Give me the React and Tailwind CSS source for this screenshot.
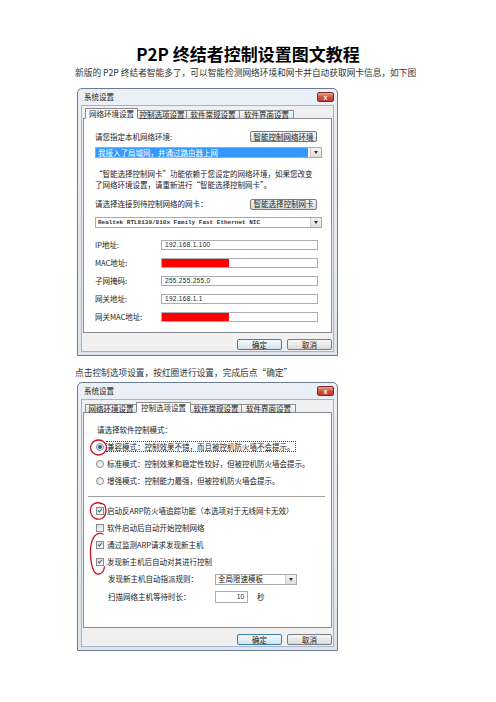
import React from "react";

const Close = () => (
  <div className="w-[17px] h-[10px] rounded-[2px] border border-[#7a2e25] bg-gradient-to-b from-[#e9a497] via-[#cf5443] to-[#c0392b] flex items-center justify-center">
    <span className="text-white text-[7px] leading-none font-bold font-['Liberation_Sans',sans-serif]">x</span>
  </div>
);

const Btn = ({ children, className, primary }) => (
  <div
    className={
      (primary
        ? "border-[#3c7fb1] from-[#f4f9fd] to-[#d3e4f1] "
        : "border-[#7b7b7b] from-[#f7f7f7] to-[#dadada] ") +
      "h-[11px] border rounded-[2px] bg-gradient-to-b flex items-center justify-center text-[7.5px] leading-none " +
      className
    }
  >
    {children}
  </div>
);

const Arrow = () => (
  <div className="w-[11px] h-full border-l border-[#c9c9c9] bg-gradient-to-b from-[#f4f4f4] to-[#dedede] flex items-center justify-center shrink-0">
    <span className="border-x-[2px] border-x-transparent border-t-[3px] border-t-[#333]" />
  </div>
);

const Tab = ({ label, active, className }) => (
  <div
    className={
      (active
        ? "h-[11px] bg-white border-b-white relative z-10 "
        : "h-[9px] bg-gradient-to-b from-[#f8f8f8] to-[#e2e2e2] ") +
      "border border-[#898c95] -ml-px first:ml-0 flex items-center justify-center text-[7.5px] leading-none " +
      className
    }
  >
    {label}
  </div>
);

const Frame = ({ height, tabs, panelHeight, children }) => (
  <div
    className={
      "w-[261px] border border-[#6b7b90] rounded-t-[5px] bg-gradient-to-b from-[#eaf0f7] to-[#dce5ef] flex flex-col " +
      height
    }
  >
    <div className="h-[16px] flex items-center justify-between pl-[6px] pr-[3px] shrink-0">
      <span className="text-[7.5px] leading-none text-[#222]">系统设置</span>
      <Close />
    </div>
    <div className="flex-1 mx-[3px] mb-[3px] bg-[#f0f0f0] border border-[#a7b3c2] flex flex-col pt-[2px] px-[1px]">
      <div className="flex items-end h-[11px] pl-[2px] -mb-px relative z-10">{tabs}</div>
      <div className={"bg-white border border-[#898c95] " + panelHeight}>{children}</div>
      <div className="flex justify-end gap-[5px] mt-[6px]">
        <Btn primary className="w-[45px]">确定</Btn>
        <Btn className="w-[45px]">取消</Btn>
      </div>
    </div>
  </div>
);

const Field = ({ label, value, red }) => (
  <div className="flex items-center h-[10px]">
    <span className="w-[66px] text-[7.5px] leading-none">{label}</span>
    <div className="w-[157px] h-[10px] border border-[#abadb3] bg-white flex items-center">
      {red ? (
        <div className="w-[67px] h-full bg-[#ff0000]" />
      ) : (
        <span className="pl-[3px] text-[6.5px] leading-none tracking-[0.3px] font-['Liberation_Sans',sans-serif]">{value}</span>
      )}
    </div>
  </div>
);

const NetworkDialog = () => (
  <Frame
    height="h-[268px]"
    panelHeight="h-[215px]"
    tabs={
      <>
        <Tab active label="网络环境设置" className="w-[53px]" />
        <Tab label="控制选项设置" className="w-[50px]" />
        <Tab label="软件常规设置" className="w-[54px]" />
        <Tab label="软件界面设置" className="w-[55px]" />
      </>
    }
  >
    <div className="pl-[11px] pt-[12px] text-[#222]">
      <div className="flex items-center justify-between w-[222px] h-[11px]">
        <span className="text-[7.5px] leading-none">请您指定本机网络环境:</span>
        <Btn className="w-[67px]">智能控制网络环境</Btn>
      </div>
      <div className="mt-[5px] w-[227px] h-[11px] border border-[#a9a9a9] bg-white flex">
        <div className="flex-1 bg-[#3399ff] mr-[2px] flex items-center pl-[2px]">
          <span className="text-[7.5px] leading-none text-white">我接入了局域网，并通过路由器上网</span>
        </div>
        <Arrow />
      </div>
      <p className="mt-[10px] text-[7.5px] leading-[11px] whitespace-nowrap">
        “智能选择控制网卡”功能依赖于您设定的网络环境，如果您改变
        <br />
        了网络环境设置，请重新进行“智能选择控制网卡”。
      </p>
      <div className="mt-[8px] flex items-center justify-between w-[222px] h-[12px]">
        <span className="text-[7.5px] leading-none">请选择连接到待控制网络的网卡：</span>
        <Btn className="w-[67px]">智能选择控制网卡</Btn>
      </div>
      <div className="mt-[7px] w-[227px] h-[11px] border border-[#a9a9a9] bg-white flex">
        <div className="flex-1 flex items-center pl-[2px]">
          <span className="text-[6px] leading-none font-['Liberation_Mono',monospace] font-bold text-[#333]">
            Realtek RTL8139/810x Family Fast Ethernet NIC
          </span>
        </div>
        <Arrow />
      </div>
      <div className="mt-[12px] flex flex-col gap-[8px]">
        <Field label="IP地址:" value="192.168.1.100" />
        <Field label="MAC地址:" red />
        <Field label="子网掩码:" value="255.255.255.0" />
        <Field label="网关地址:" value="192.168.1.1" />
        <Field label="网关MAC地址:" red />
      </div>
    </div>
  </Frame>
);

const Radio = ({ on }) => (
  <span className="w-[8px] h-[8px] rounded-full border border-[#8b8b8b] bg-gradient-to-br from-[#dcdcdc] to-[#ffffff] flex items-center justify-center shrink-0">
    {on && <span className="w-[4px] h-[4px] rounded-full bg-[#2d5ca5]" />}
  </span>
);

const Check = ({ on }) => (
  <span className="w-[8px] h-[8px] border border-[#8b8b8b] bg-gradient-to-br from-[#dcdcdc] to-[#fafafa] flex items-center justify-center shrink-0">
    {on && (
      <svg viewBox="0 0 8 8" className="w-[7px] h-[7px]">
        <path d="M1.4 4.1 L3.2 5.9 L6.6 1.7" fill="none" stroke="#3b5590" strokeWidth="1.4" />
      </svg>
    )}
  </span>
);

const ControlDialog = () => (
  <Frame
    height="h-[269px]"
    panelHeight="h-[216px]"
    tabs={
      <>
        <Tab label="网络环境设置" className="w-[52px]" />
        <Tab active label="控制选项设置" className="w-[55px]" />
        <Tab label="软件常规设置" className="w-[52px]" />
        <Tab label="软件界面设置" className="w-[55px]" />
      </>
    }
  >
    <div className="pt-[11px] text-[7.5px] text-[#222]">
      <div className="pl-[13px] h-[11px] leading-[11px]">请选择软件控制模式：</div>
      <div className="pl-[12px] mt-[3px]">
        <div className="h-[17px] flex items-center gap-[3px]">
          <Radio on />
          <span className="leading-[9px] border border-dotted border-[#444] -ml-px">兼容模式：控制效果不错，而且被控机防火墙不会提示。</span>
        </div>
        <div className="h-[17px] flex items-center gap-[3px]">
          <Radio />
          <span className="leading-none">标准模式：控制效果和稳定性较好，但被控机防火墙会提示。</span>
        </div>
        <div className="h-[17px] flex items-center gap-[3px]">
          <Radio />
          <span className="leading-none">增强模式：控制能力最强，但被控机防火墙会提示。</span>
        </div>
      </div>
      <div className="ml-[4px] mr-[6px] mt-[7px] h-[2px] border-t border-[#a0a0a0] border-b border-b-white" />
      <div className="pl-[12px] mt-[4px]">
        <div className="h-[17px] flex items-center gap-[3px]">
          <Check on />
          <span className="leading-none">启动反ARP防火墙追踪功能（本选项对于无线网卡无效）</span>
        </div>
        <div className="h-[17px] flex items-center gap-[3px]">
          <Check />
          <span className="leading-none">软件启动后自动开始控制网络</span>
        </div>
        <div className="h-[17px] flex items-center gap-[3px]">
          <Check on />
          <span className="leading-none">通过监测ARP请求发现新主机</span>
        </div>
        <div className="h-[17px] flex items-center gap-[3px]">
          <Check on />
          <span className="leading-none">发现新主机后自动对其进行控制</span>
        </div>
      </div>
      <div className="pl-[24px] mt-[3px] h-[12px] flex items-center">
        <span className="w-[107px] leading-none">发现新主机自动指派规则：</span>
        <div className="w-[82px] h-[11px] border border-[#a9a9a9] bg-white flex">
          <div className="flex-1 flex items-center pl-[2px]">
            <span className="leading-none">全局限速模板</span>
          </div>
          <Arrow />
        </div>
      </div>
      <div className="pl-[24px] mt-[6px] h-[12px] flex items-center">
        <span className="w-[107px] leading-none">扫描网络主机等待时长：</span>
        <div className="w-[33px] h-[12px] border border-[#abadb3] bg-white flex items-center justify-end pr-[3px]">
          <span className="text-[6.5px] leading-none font-['Liberation_Sans',sans-serif]">10</span>
        </div>
        <span className="ml-[9px] leading-none">秒</span>
      </div>
    </div>
  </Frame>
);

const RedMarks = () => (
  <svg className="absolute left-0 top-0 w-[261px] h-[269px] pointer-events-none overflow-visible" viewBox="0 0 261 269">
    <g fill="none" stroke="#cc1020" strokeWidth="1.3" strokeLinecap="round">
      <ellipse cx="21.5" cy="65.5" rx="8" ry="7.5" />
      <path d="M27 122.5 C 21 119, 13 121, 13.5 129 C 14 136, 20 138.5, 25 136.5 C 29 134.5, 30 128, 27.5 123" />
      <path d="M26 152 C 18 149, 13 158, 13.5 172 C 14 185, 17 193, 22 192 C 25 191.5, 27 188, 27.5 185" />
    </g>
  </svg>
);

export default function App() {
  return (
    <div className="w-[496px] h-[702px] bg-white relative overflow-hidden font-['Noto_Sans_CJK_SC',sans-serif] text-[#1a1a1a]">
      <h1 className="pt-[44px] text-center text-[17px] leading-[20px] font-bold text-black">
        P2P 终结者控制设置图文教程
      </h1>
      <p className="mt-[3px] ml-[75px] text-[8.7px] leading-[12px] text-[#333] whitespace-nowrap">
        新版的 P2P 终结者智能多了，可以智能检测网络环境和网卡并自动获取网卡信息，如下图
      </p>
      <div className="mt-[9px] ml-[77px]">
        <NetworkDialog />
      </div>
      <p className="mt-[11px] ml-[75px] text-[8.7px] leading-[12px] text-[#333] whitespace-nowrap">
        点击控制选项设置，按红圈进行设置，完成后点“确定”
      </p>
      <div className="mt-[3px] ml-[77px] relative w-[261px]">
        <ControlDialog />
        <RedMarks />
      </div>
    </div>
  );
}
